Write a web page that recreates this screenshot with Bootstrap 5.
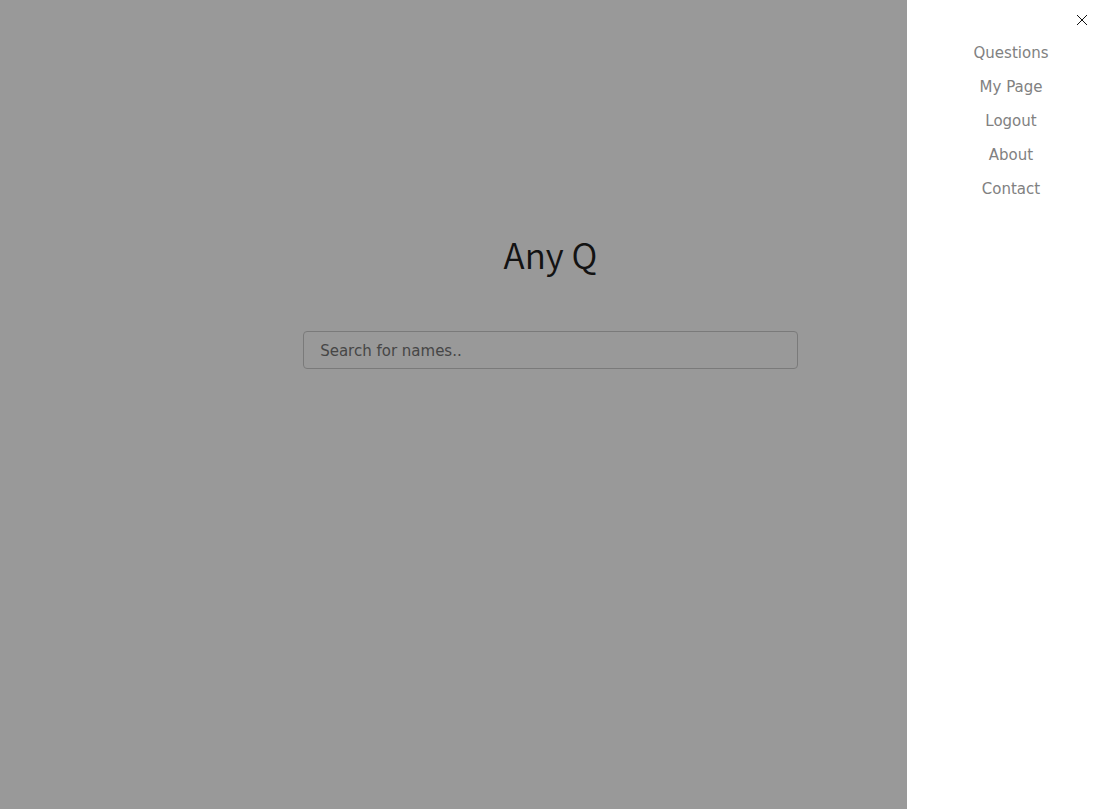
<!DOCTYPE html>
<html lang="en">
<head>
<meta charset="utf-8">
<meta name="viewport" content="width=device-width, initial-scale=1">
<title>Any Q</title>
<link href="https://cdn.jsdelivr.net/npm/bootstrap@5.3.0/dist/css/bootstrap.min.css" rel="stylesheet">
<style>
  body { font-family: Verdana, "DejaVu Sans", sans-serif; font-size: 15px; }
  .hero { padding-top: 228px; padding-left: 3px; }
  .site-title { font-family: "Noto Sans CJK KR", "Open Sans", sans-serif; font-size: 35px; line-height: 52px; font-weight: 350; color: #212121; }
  .search-form { width: calc(45% + 2px); min-width: 240px; margin-top: 51px; }
  .search-form .form-control { height: 38px; padding: 2px 16px 0; font-size: 15px; border-color: #ccc; border-radius: 4px; background: #fff; }
  .search-form .form-control::placeholder { color: #757575; opacity: 1; }
  .shade { background: rgba(0, 0, 0, .4); opacity: 1; }
  .side-menu.offcanvas { --bs-offcanvas-width: 191px; border: 0; }
  .side-menu .nav { padding-left: 17px; }
  .side-menu .nav-link { padding: 0; color: #818181; line-height: 34px; }
</style>
</head>
<body>
<main class="hero d-flex flex-column align-items-center">
  <h1 class="site-title mb-0">Any Q</h1>
  <form class="search-form" role="search">
    <input id="search" type="text" class="form-control" placeholder="Search for names.." aria-label="Search for names">
  </form>
</main>

<div class="offcanvas-backdrop shade"></div>
<aside class="offcanvas offcanvas-end show side-menu" data-bs-backdrop="false" data-bs-scroll="true" aria-label="Menu">
  <div class="d-flex justify-content-end pt-2 pe-2">
    <button type="button" class="btn border-0 p-0 d-flex mt-1" data-bs-dismiss="offcanvas" aria-label="Close">
      <svg width="16" height="16" viewBox="0 0 16 16" fill="none" stroke="#111" stroke-width="1"><path d="M3 3 13 13M13 3 3 13"/></svg>
    </button>
  </div>
  <nav class="nav flex-column text-center pt-2">
    <a class="nav-link" href="#">Questions</a>
    <a class="nav-link" href="#">My Page</a>
    <a class="nav-link" href="#">Logout</a>
    <a class="nav-link" href="#">About</a>
    <a class="nav-link" href="#">Contact</a>
  </nav>
</aside>
<script src="https://cdn.jsdelivr.net/npm/bootstrap@5.3.0/dist/js/bootstrap.bundle.min.js"></script>
</body>
</html>
